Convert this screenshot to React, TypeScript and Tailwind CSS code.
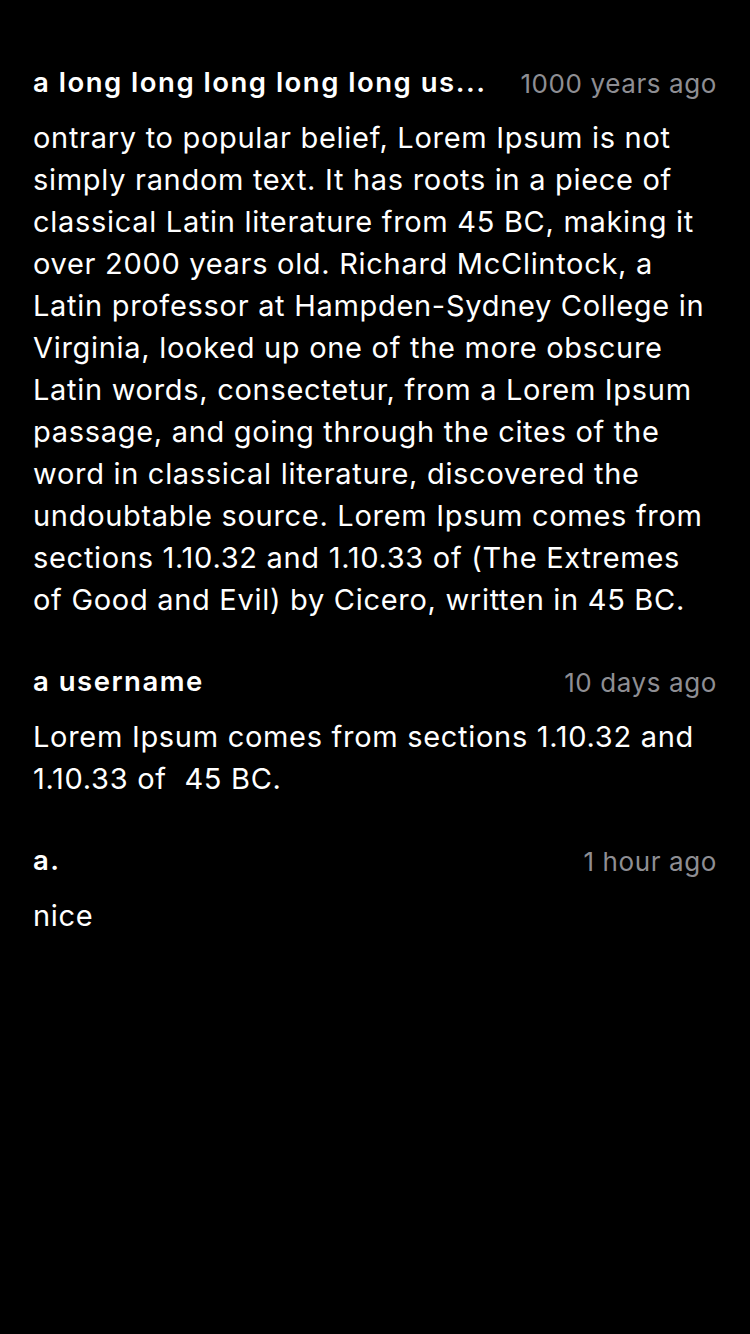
import React from "react";

const comments = [
  {
    user: "a long long long long long us...",
    time: "1000 years ago",
    lines: [
      "ontrary to popular belief, Lorem Ipsum is not",
      "simply random text. It has roots in a piece of",
      "classical Latin literature from 45 BC, making it",
      "over 2000 years old. Richard McClintock, a",
      "Latin professor at Hampden-Sydney College in",
      "Virginia, looked up one of the more obscure",
      "Latin words, consectetur, from a Lorem Ipsum",
      "passage, and going through the cites of the",
      "word in classical literature, discovered the",
      "undoubtable source. Lorem Ipsum comes from",
      "sections 1.10.32 and 1.10.33 of (The Extremes",
      "of Good and Evil) by Cicero, written in 45 BC.",
    ],
  },
  {
    user: "a username",
    time: "10 days ago",
    lines: ["Lorem Ipsum comes from sections 1.10.32 and", "1.10.33 of \u00a045 BC."],
  },
  { user: "a.", time: "1 hour ago", lines: ["nice"] },
];

export default function App() {
  return (
    <div
      className="min-h-[1334px] w-[750px] bg-black px-[33px] pt-[63px] text-white"
      style={{ fontFamily: "Inter, Roboto, 'Noto Sans', sans-serif" }}
    >
      <div className="flex flex-col gap-[41px]">
        {comments.map((c, i) => (
          <div key={i} className="flex flex-col">
            <div className="flex h-[40px] items-center justify-between">
              <span className="whitespace-pre text-[27.5px] font-semibold tracking-[1.5px]">{c.user}</span>
              <span className="whitespace-pre text-[26px] tracking-[0.6px] text-[#8e8e93]">{c.time}</span>
            </div>
            <div className="mt-[14px] text-[29px] leading-[42px] tracking-[0.7px]">
              {c.lines.map((l, j) => (
                <div key={j} className="whitespace-pre">
                  {l}
                </div>
              ))}
            </div>
          </div>
        ))}
      </div>
    </div>
  );
}
